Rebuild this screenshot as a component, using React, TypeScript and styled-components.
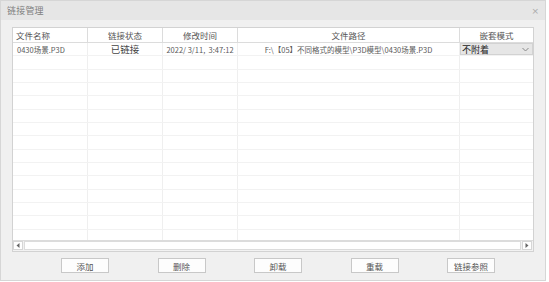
import React from 'react'
import styled, { createGlobalStyle } from 'styled-components'

const GlobalStyle = createGlobalStyle`
  html, body {
    margin: 0;
    padding: 0;
    background: #ffffff;
  }
  body {
    font-family: "Noto Sans CJK SC", "Noto Sans", sans-serif;
  }
`

const columns = [
  { title: '文件名称', width: 75 },
  { title: '链接状态', width: 75 },
  { title: '修改时间', width: 75 },
  { title: '文件路径', width: 222 },
  { title: '嵌套模式', width: 73 },
]

const EMPTY_ROWS = 14

const App: React.FC = () => {
  return (
    <>
      <GlobalStyle />
      <StyledWindow>
        <StyledTitleBar>
          <StyledTitle>链接管理</StyledTitle>
          <StyledClose>×</StyledClose>
        </StyledTitleBar>
        <StyledBody>
          <StyledPanel>
            <StyledGrid>
              <StyledHeaderRow>
                {columns.map((c) => (
                  <StyledHeaderCell key={c.title} $width={c.width}>
                    {c.title}
                  </StyledHeaderCell>
                ))}
              </StyledHeaderRow>
              <StyledRow>
                <StyledCell $width={75} $align="left">0430场景.P3D</StyledCell>
                <StyledCell $width={75} $big>已链接</StyledCell>
                <StyledCell $width={75}>2022/ 3/11,&nbsp;&nbsp;3:47:12</StyledCell>
                <StyledCell $width={222}>F:\【05】不同格式的模型\P3D模型\0430场景.P3D</StyledCell>
                <StyledCell $width={73}>
                  <StyledSelect>
                    <span>不附着</span>
                    <svg width="7" height="5" viewBox="0 0 7 5">
                      <path d="M0.5 1 L3.5 4 L6.5 1" fill="none" stroke="#888" strokeWidth="1" />
                    </svg>
                  </StyledSelect>
                </StyledCell>
              </StyledRow>
              {Array.from({ length: EMPTY_ROWS }).map((_, i) => (
                <StyledRow key={i}>
                  {columns.map((c) => (
                    <StyledCell key={c.title} $width={c.width} />
                  ))}
                </StyledRow>
              ))}
            </StyledGrid>
            <StyledScrollbar>
              <StyledArrow>
                <svg width="4" height="5" viewBox="0 0 4 5">
                  <path d="M3.5 0 L0.5 2.5 L3.5 5 Z" fill="#666" />
                </svg>
              </StyledArrow>
              <StyledTrack />
              <StyledArrow>
                <svg width="4" height="5" viewBox="0 0 4 5">
                  <path d="M0.5 0 L3.5 2.5 L0.5 5 Z" fill="#666" />
                </svg>
              </StyledArrow>
            </StyledScrollbar>
          </StyledPanel>
          <StyledActions>
            <StyledButton>添加</StyledButton>
            <StyledButton>删除</StyledButton>
            <StyledButton>卸载</StyledButton>
            <StyledButton>重载</StyledButton>
            <StyledButton>链接参照</StyledButton>
          </StyledActions>
        </StyledBody>
      </StyledWindow>
    </>
  )
}

const StyledWindow = styled.div`
  width: 546px;
  height: 281px;
  box-sizing: border-box;
  border: 1px solid #d6d6d6;
  background: #f0f0f0;
  display: flex;
  flex-direction: column;
`

const StyledTitleBar = styled.div`
  height: 19px;
  background: #e6e6e6;
  display: flex;
  align-items: center;
  justify-content: space-between;
  padding: 0 6px 0 6px;
`

const StyledTitle = styled.div`
  font-size: 9px;
  color: #808080;
  letter-spacing: 0.2px;
`

const StyledClose = styled.div`
  font-family: "DejaVu Sans", sans-serif;
  font-size: 9px;
  color: #aaa;
`

const StyledBody = styled.div`
  flex: 1;
  display: flex;
  flex-direction: column;
  padding: 7px 0 0 11px;
`

const StyledPanel = styled.div`
  width: 522px;
  height: 225px;
  box-sizing: border-box;
  border: 1px solid #d2d2d2;
  background: #ffffff;
  display: flex;
  flex-direction: column;
`

const StyledGrid = styled.div`
  flex: 1;
  overflow: hidden;
  display: flex;
  flex-direction: column;
`

const StyledHeaderRow = styled.div`
  display: flex;
  height: 15px;
  flex-shrink: 0;
  box-sizing: border-box;
  border-bottom: 1px solid #dcdcdc;
`

const StyledHeaderCell = styled.div<{ $width: number }>`
  width: ${(p) => p.$width}px;
  box-sizing: border-box;
  border-right: 1px solid #dcdcdc;
  font-size: 8.5px;
  color: #555;
  display: flex;
  align-items: center;
  justify-content: center;
  &:first-child {
    justify-content: flex-start;
    padding-left: 3px;
  }
  &:last-child {
    border-right: none;
  }
`

const StyledRow = styled.div`
  display: flex;
  height: 13.33px;
  flex-shrink: 0;
  box-sizing: border-box;
  border-bottom: 1px solid #f2f2f2;
`

const StyledCell = styled.div<{ $width: number; $align?: string; $big?: boolean }>`
  width: ${(p) => p.$width}px;
  box-sizing: border-box;
  border-right: 1px solid #efefef;
  font-size: ${(p) => (p.$big ? '9.5px' : '7.5px')};
  color: ${(p) => (p.$big ? '#444' : '#5a5a5a')};
  white-space: nowrap;
  overflow: hidden;
  display: flex;
  align-items: center;
  justify-content: ${(p) => (p.$align === 'left' ? 'flex-start' : 'center')};
  padding-left: ${(p) => (p.$align === 'left' ? '4px' : '0')};
  &:last-child {
    border-right: none;
  }
`

const StyledSelect = styled.div`
  width: 100%;
  height: 100%;
  background: #e6e6e6;
  border: 1px solid #d2d2d2;
  box-sizing: border-box;
  display: flex;
  align-items: center;
  justify-content: space-between;
  padding: 0 3px 0 1px;
  font-size: 9px;
  color: #222;
`

const StyledScrollbar = styled.div`
  display: flex;
  height: 11px;
  flex-shrink: 0;
  gap: 1px;
  padding: 0 1px 1px 0;
  box-sizing: border-box;
  background: #f2f2f2;
  border-top: 1px solid #dcdcdc;
`

const StyledArrow = styled.div`
  width: 10px;
  background: #ffffff;
  border: 1px solid #d6d6d6;
  box-sizing: border-box;
  display: flex;
  align-items: center;
  justify-content: center;
`

const StyledTrack = styled.div`
  flex: 1;
  background: #ffffff;
  border: 1px solid #dcdcdc;
  box-sizing: border-box;
`

const StyledActions = styled.div`
  display: flex;
  gap: 48.5px;
  margin-top: 6px;
  padding-left: 49px;
`

const StyledButton = styled.button`
  width: 48px;
  height: 15px;
  padding: 0;
  box-sizing: border-box;
  border: 1px solid #c8c8c8;
  background: #fdfdfd;
  font-family: "Noto Sans CJK SC", "Noto Sans", sans-serif;
  font-size: 8.5px;
  color: #555;
  display: flex;
  align-items: center;
  justify-content: center;
`

export default App
